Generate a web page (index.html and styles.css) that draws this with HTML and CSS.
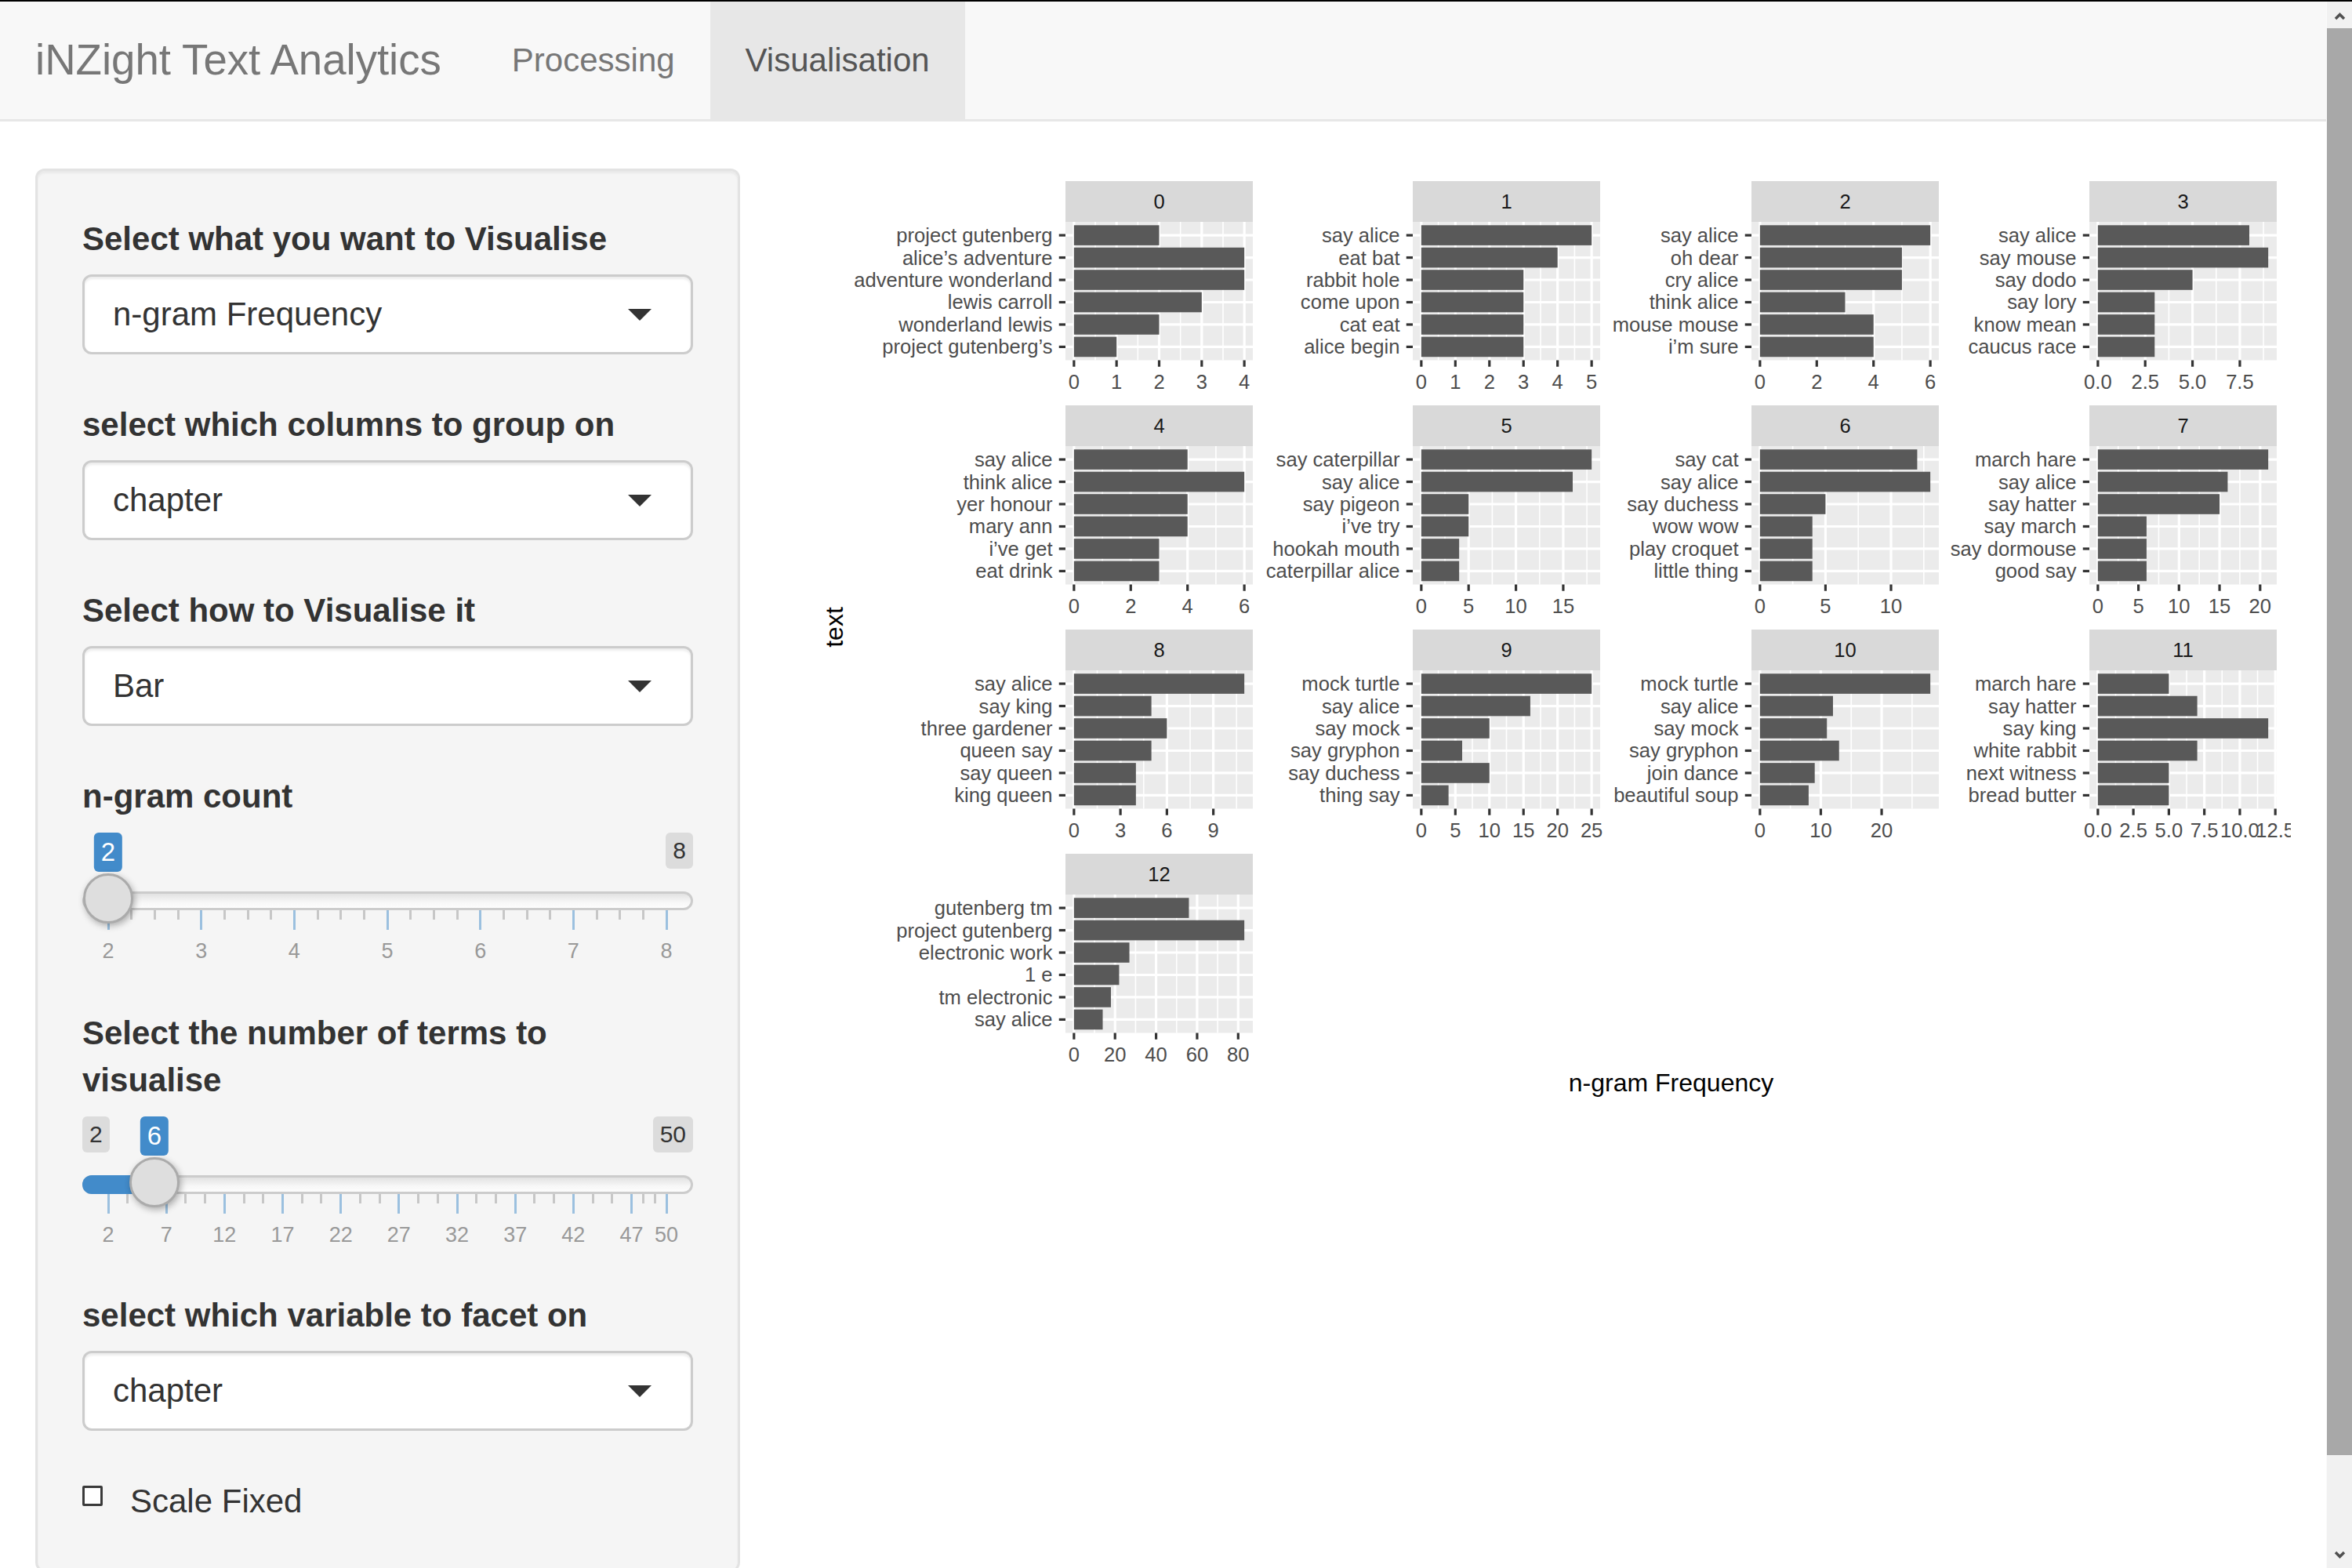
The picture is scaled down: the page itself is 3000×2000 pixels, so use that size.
FILE: index.html
```html
<!DOCTYPE html>
<html lang="en">
<head>
<meta charset="utf-8">
<title>iNZight Text Analytics</title>
<link rel="stylesheet" href="styles.css">
</head>
<body>
<div class="page">
  <nav class="navbar">
    <span class="brand">iNZight Text Analytics</span>
    <ul class="nav">
      <li class="nav-item"><a class="nav-link">Processing</a></li>
      <li class="nav-item active"><a class="nav-link">Visualisation</a></li>
    </ul>
  </nav>
  <div class="layout">
    <aside class="sidebar">
      <div class="well">
        <div class="group">
          <label class="label">Select what you want to Visualise</label>
          <div class="select"><span class="select-value">n-gram Frequency</span><span class="caret"></span></div>
        </div>
        <div class="group">
          <label class="label">select which columns to group on</label>
          <div class="select"><span class="select-value">chapter</span><span class="caret"></span></div>
        </div>
        <div class="group">
          <label class="label">Select how to Visualise it</label>
          <div class="select"><span class="select-value">Bar</span><span class="caret"></span></div>
        </div>
        <div class="group">
          <label class="label">n-gram count</label>
          <div class="slider" id="slider1">
            <span class="irs-line"></span>
            <span class="bubble single" style="left:33px">2</span>
            <span class="bubble minmax max">8</span>
            <div class="irs-grid" id="grid1"></div>
            <span class="knob" style="left:1px"></span>
          </div>
        </div>
        <div class="group">
          <label class="label">Select the number of terms to visualise</label>
          <div class="slider slider-terms" id="slider2">
            <span class="irs-line"></span>
            <span class="irs-bar" style="width:92px"></span>
            <span class="bubble minmax min">2</span>
            <span class="bubble single" style="left:92px">6</span>
            <span class="bubble minmax max">50</span>
            <div class="irs-grid" id="grid2"></div>
            <span class="knob" style="left:60px"></span>
          </div>
        </div>
        <div class="group">
          <label class="label">select which variable to facet on</label>
          <div class="select"><span class="select-value">chapter</span><span class="caret"></span></div>
        </div>
        <div class="checkbox">
          <span class="check-box"></span>
          <span class="check-label">Scale Fixed</span>
        </div>
      </div>
    </aside>
    <main class="main">
      <svg class="plot" id="plot" width="1888" height="1200" viewBox="0 0 1888 1200" xmlns="http://www.w3.org/2000/svg">
        <text class="axis-title" transform="translate(30,585) rotate(-90)">text</text>
        <text class="axis-title" x="1097.5" y="1166">n-gram Frequency</text>
      </svg>
    </main>
  </div>
</div>
<div class="scrollbar">
  <svg class="sb-svg" width="33" height="1998" viewBox="0 0 33 1998" xmlns="http://www.w3.org/2000/svg">
    <rect class="sb-thumb" x="0" y="34" width="32" height="1820"></rect>
    <polyline class="sb-arrow" points="11,22 16.5,16.5 22,22"></polyline>
    <polyline class="sb-arrow" points="11,1978 16.5,1983.5 22,1978"></polyline>
  </svg>
</div>
<script src="plot.js"></script>
</body>
</html>
```

FILE: styles.css
```css
html, body {
  margin: 0;
  padding: 0;
  height: 2000px;
  overflow: hidden;
}
body {
  font-family: "Liberation Sans", Arial, Helvetica, sans-serif;
  font-size: 42px;
  line-height: 60px;
  color: #333;
  background: #fff;
  border-top: 2px solid #000;
  box-sizing: border-box;
}
.page {
  width: 2967px;
}
.navbar {
  display: flex;
  align-items: stretch;
  height: 150px;
  background: #f8f8f8;
  border-bottom: 3px solid #e7e7e7;
  margin-bottom: 60px;
}
.brand {
  padding: 0 45px;
  font-size: 54.6px;
  line-height: 150px;
  color: #777;
}
.nav {
  display: flex;
  list-style: none;
  margin: 0;
  padding: 0;
}
.nav-link {
  display: block;
  padding: 0 45px;
  line-height: 150px;
  color: #777;
}
.nav-item.active .nav-link {
  background: #e7e7e7;
  color: #555;
}
.layout {
  display: grid;
  grid-template-columns: 989px 1978px;
}
.sidebar {
  padding: 0 45px;
}
.well {
  background: #f5f5f5;
  border: 3px solid #e3e3e3;
  border-radius: 12px;
  padding: 57px;
  box-shadow: inset 0 3px 3px rgba(0, 0, 0, 0.05);
  height: 1790px;
  box-sizing: border-box;
}
.group {
  margin-bottom: 60px;
}
.label {
  display: block;
  font-weight: 700;
  margin-bottom: 15px;
  line-height: 60px;
}
.select {
  display: flex;
  align-items: center;
  justify-content: space-between;
  height: 102px;
  box-sizing: border-box;
  padding: 0 50px 0 36px;
  background: #fff;
  border: 3px solid #ccc;
  border-radius: 12px;
  box-shadow: inset 0 3px 3px rgba(0, 0, 0, 0.075);
  color: #333;
}
.caret {
  width: 0;
  height: 0;
  border-style: solid;
  border-width: 15px 15px 0 15px;
  border-color: #333 transparent transparent transparent;
}
.slider {
  position: relative;
  height: 167px;
}
.slider-terms {
  height: 165px;
}
.irs-line {
  position: absolute;
  left: 0;
  right: 0;
  top: 76px;
  height: 24px;
  box-sizing: border-box;
  border: 3px solid #ccc;
  border-radius: 24px;
  background: linear-gradient(to bottom, #e2e2e2 0%, #f7f7f7 60%, #fdfdfd 100%);
}
.irs-bar {
  position: absolute;
  left: 0;
  top: 76px;
  height: 24px;
  background: #428bca;
  border-radius: 24px 0 0 24px;
}
.bubble {
  position: absolute;
  top: 1px;
  padding: 3px 9px;
  border-radius: 6px;
  white-space: nowrap;
}
.bubble.single {
  font-size: 33px;
  line-height: 44px;
  background: #428bca;
  color: #fff;
  transform: translateX(-50%);
}
.bubble.minmax {
  font-size: 30px;
  line-height: 40px;
  background: #dcdcdc;
  color: #333;
}
.bubble.min {
  left: 0;
}
.bubble.max {
  right: 0;
}
.knob {
  position: absolute;
  top: 53px;
  width: 64px;
  height: 64px;
  box-sizing: border-box;
  border: 3px solid #ababab;
  border-radius: 50%;
  background: #dedede;
  box-shadow: 2px 3px 8px rgba(0, 0, 0, 0.3);
}
.irs-grid {
  position: absolute;
  left: 0;
  right: 0;
  top: 100px;
  height: 67px;
}
.irs-tick {
  position: absolute;
  top: 0;
  width: 3px;
  height: 25px;
  margin-left: -1.5px;
  background: #9bc0df;
}
.irs-tick.small {
  height: 12px;
  background: #c7c7c7;
}
.irs-text {
  position: absolute;
  top: 37px;
  font-size: 27px;
  line-height: 30px;
  color: #999;
  transform: translateX(-50%);
  white-space: nowrap;
}
.checkbox {
  display: flex;
  align-items: flex-start;
  line-height: 60px;
}
.check-box {
  width: 26px;
  height: 26px;
  box-sizing: border-box;
  margin-top: 10px;
  margin-right: 35px;
  border: 3px solid #3a3a3a;
  border-radius: 2px;
  background: #fff;
}
.main {
  padding: 0 45px;
}
.plot {
  display: block;
  overflow: hidden;
  font-family: "Liberation Sans", Arial, Helvetica, sans-serif;
}
.plot .strip {
  fill: #d9d9d9;
}
.plot .strip-text {
  fill: #1a1a1a;
  font-size: 25.6px;
  text-anchor: middle;
  dominant-baseline: central;
}
.plot .panel-bg {
  fill: #ebebeb;
}
.plot .grid-minor {
  stroke: #fff;
  stroke-width: 1.6;
}
.plot .grid-major {
  stroke: #fff;
  stroke-width: 3.2;
}
.plot .bar {
  fill: #595959;
}
.plot .tick {
  stroke: #333;
  stroke-width: 3.2;
}
.plot .axis-text {
  fill: #4d4d4d;
  font-size: 25.6px;
  dominant-baseline: central;
}
.plot .axis-text.y {
  text-anchor: end;
}
.plot .axis-text.x {
  text-anchor: middle;
}
.plot .axis-title {
  fill: #000;
  font-size: 32px;
  text-anchor: middle;
  dominant-baseline: central;
}
.scrollbar {
  position: fixed;
  top: 2px;
  right: 0;
  width: 33px;
  height: 1998px;
  background: #f1f1f1;
  border-left: 1px solid #fbfbfb;
  box-sizing: border-box;
}
.sb-svg {
  display: block;
}
.sb-thumb {
  fill: #a8a8a8;
}
.sb-arrow {
  fill: none;
  stroke: #505050;
  stroke-width: 3.5;
}
```

FILE: plot.js
```js
(function () {
  var NS = 'http://www.w3.org/2000/svg';
  var svg = document.getElementById('plot');
  function el(tag, attrs, text) {
    var e = document.createElementNS(NS, tag);
    for (var k in attrs) { e.setAttribute(k, attrs[k]); }
    if (text !== undefined) { e.textContent = text; }
    svg.appendChild(e);
    return e;
  }
  var A = '\u2019';
  var panels = [
    ['0', ['project gutenberg', 'alice' + A + 's adventure', 'adventure wonderland', 'lewis carroll', 'wonderland lewis', 'project gutenberg' + A + 's'], [2, 4, 4, 3, 2, 1], 4, [0, 1, 2, 3, 4], 0],
    ['1', ['say alice', 'eat bat', 'rabbit hole', 'come upon', 'cat eat', 'alice begin'], [5, 4, 3, 3, 3, 3], 5, [0, 1, 2, 3, 4, 5], 0],
    ['2', ['say alice', 'oh dear', 'cry alice', 'think alice', 'mouse mouse', 'i' + A + 'm sure'], [6, 5, 5, 3, 4, 4], 6, [0, 2, 4, 6], 0],
    ['3', ['say alice', 'say mouse', 'say dodo', 'say lory', 'know mean', 'caucus race'], [8, 9, 5, 3, 3, 3], 9, [0, 2.5, 5, 7.5], 1],
    ['4', ['say alice', 'think alice', 'yer honour', 'mary ann', 'i' + A + 've get', 'eat drink'], [4, 6, 4, 4, 3, 3], 6, [0, 2, 4, 6], 0],
    ['5', ['say caterpillar', 'say alice', 'say pigeon', 'i' + A + 've try', 'hookah mouth', 'caterpillar alice'], [18, 16, 5, 5, 4, 4], 18, [0, 5, 10, 15], 0],
    ['6', ['say cat', 'say alice', 'say duchess', 'wow wow', 'play croquet', 'little thing'], [12, 13, 5, 4, 4, 4], 13, [0, 5, 10], 0],
    ['7', ['march hare', 'say alice', 'say hatter', 'say march', 'say dormouse', 'good say'], [21, 16, 15, 6, 6, 6], 21, [0, 5, 10, 15, 20], 0],
    ['8', ['say alice', 'say king', 'three gardener', 'queen say', 'say queen', 'king queen'], [11, 5, 6, 5, 4, 4], 11, [0, 3, 6, 9], 0],
    ['9', ['mock turtle', 'say alice', 'say mock', 'say gryphon', 'say duchess', 'thing say'], [25, 16, 10, 6, 10, 4], 25, [0, 5, 10, 15, 20, 25], 0],
    ['10', ['mock turtle', 'say alice', 'say mock', 'say gryphon', 'join dance', 'beautiful soup'], [28, 12, 11, 13, 9, 8], 28, [0, 10, 20], 0],
    ['11', ['march hare', 'say hatter', 'say king', 'white rabbit', 'next witness', 'bread butter'], [5, 7, 12, 7, 5, 5], 12, [0, 2.5, 5, 7.5, 10, 12.5], 1],
    ['12', ['gutenberg tm', 'project gutenberg', 'electronic work', '1 e', 'tm electronic', 'say alice'], [56, 83, 27, 22, 18, 14], 83, [0, 20, 40, 60, 80], 0]
  ];
  var colX = [325, 768, 1200, 1631];
  var rowY = [16, 302, 588, 874];
  var W = 239, SH = 52, PH = 176.5;
  panels.forEach(function (p, idx) {
    var L = colX[idx % 4], T = rowY[Math.floor(idx / 4)];
    var PT = T + SH, PB = PT + PH;
    var m = p[3], lo = -0.05 * m, hi = 1.05 * m;
    function X(v) { return L + (v - lo) / (hi - lo) * W; }
    el('rect', { x: L, y: T, width: W, height: SH, 'class': 'strip' });
    el('text', { x: L + W / 2, y: T + SH / 2, 'class': 'strip-text' }, p[0]);
    el('rect', { x: L, y: PT, width: W, height: PH, 'class': 'panel-bg' });
    var br = p[4], step = br[1] - br[0];
    var k, i, cy;
    for (k = -1; k < br.length; k++) {
      var mv = br[0] + (k + 0.5) * step;
      if (mv > lo && mv < hi) {
        el('line', { x1: X(mv), x2: X(mv), y1: PT, y2: PB, 'class': 'grid-minor' });
      }
    }
    var u = PH / 6.2;
    for (i = 0; i < 6; i++) {
      cy = PT + (0.6 + i) * u;
      el('line', { x1: L, x2: L + W, y1: cy, y2: cy, 'class': 'grid-major' });
    }
    br.forEach(function (b) {
      el('line', { x1: X(b), x2: X(b), y1: PT, y2: PB, 'class': 'grid-major' });
    });
    for (i = 0; i < 6; i++) {
      cy = PT + (0.6 + i) * u;
      el('rect', { x: X(0), y: cy - 0.45 * u, width: X(p[2][i]) - X(0), height: 0.9 * u, 'class': 'bar' });
      el('line', { x1: L - 8.25, x2: L, y1: cy, y2: cy, 'class': 'tick' });
      el('text', { x: L - 16.5, y: cy, 'class': 'axis-text y' }, p[1][i]);
    }
    br.forEach(function (b) {
      el('line', { x1: X(b), x2: X(b), y1: PB, y2: PB + 8.25, 'class': 'tick' });
      el('text', { x: X(b), y: PB + 27.5, 'class': 'axis-text x' }, p[5] ? b.toFixed(1) : String(b));
    });
  });

  function buildGrid(id, min, max, majors, minors) {
    var g = document.getElementById(id);
    var off = 33, span = 712;
    function pos(v) { return (off + (v - min) / (max - min) * span).toFixed(2) + 'px'; }
    minors.forEach(function (v) {
      var d = document.createElement('span');
      d.className = 'irs-tick small';
      d.style.left = pos(v);
      g.appendChild(d);
    });
    majors.forEach(function (v) {
      var d = document.createElement('span');
      d.className = 'irs-tick';
      d.style.left = pos(v);
      g.appendChild(d);
      var t = document.createElement('span');
      t.className = 'irs-text';
      t.style.left = pos(v);
      t.textContent = String(v);
      g.appendChild(t);
    });
  }
  var maj1 = [2, 3, 4, 5, 6, 7, 8], min1 = [];
  for (var a = 2; a < 8; a++) { min1.push(a + 0.25, a + 0.5, a + 0.75); }
  buildGrid('grid1', 2, 8, maj1, min1);
  var maj2 = [2, 7, 12, 17, 22, 27, 32, 37, 42, 47, 50], min2 = [];
  for (var j = 0; j < maj2.length - 1; j++) {
    var s = maj2[j], e = maj2[j + 1], d = (e - s) / 3;
    min2.push(s + d, s + 2 * d);
  }
  buildGrid('grid2', 2, 50, maj2, min2);
})();
```
